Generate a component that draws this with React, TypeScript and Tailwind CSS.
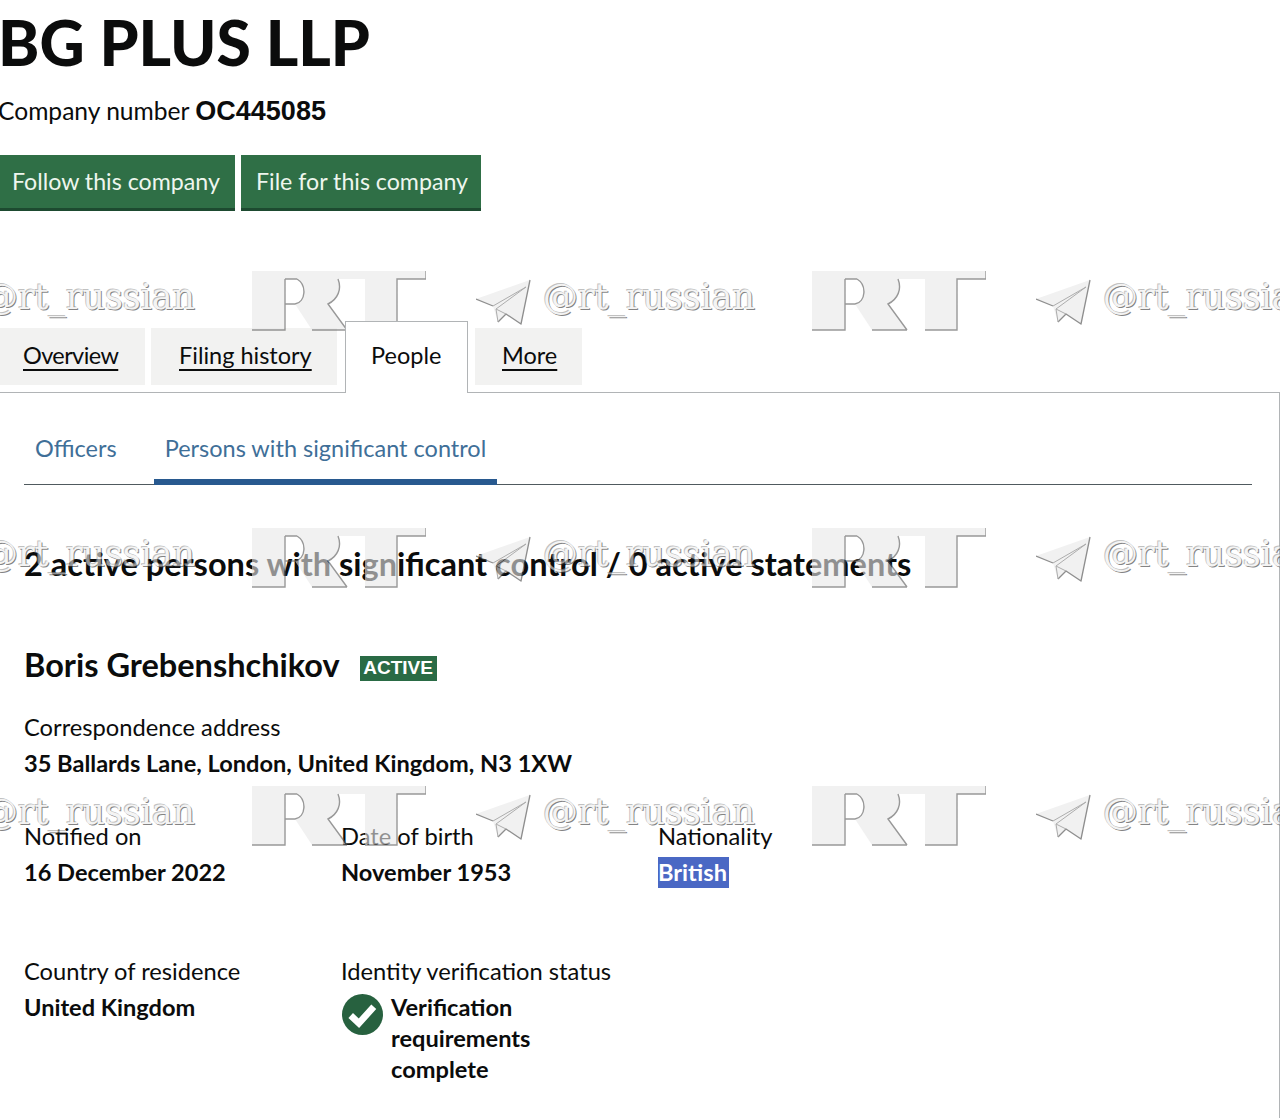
const font = "font-['Lato','Noto_Sans',sans-serif]";

const tabClass =
  "flex h-[57px] items-center bg-[#f2f2f1] pb-[2px] text-[23.5px] text-[#0b0c0c] underline underline-offset-[5px]";

function TelegramMark() {
  return (
    <svg viewBox="0 0 56 48" className="mt-[8px] h-[48px] w-[56px] shrink-0 self-start" aria-hidden="true">
      <path d="M0 20 L54 1 L45 45 L30 35 L22 43 L17 27 Z" fill="#e8e8e8" />
      <path d="M54 1 L45 45 L30 35 L22 43 M0 20 L17 27" fill="none" stroke="#444444" strokeWidth="1.3" strokeLinejoin="round" />
      <path d="M50 8 L17 27 M50 8 L20 30 L22 43 M20 30 L30 35" fill="none" stroke="#777777" strokeWidth="1" />
    </svg>
  );
}

function RtLogo() {
  return (
    <svg viewBox="0 0 174 60" className="h-[60px] w-[174px] shrink-0" aria-hidden="true">
      <path
        d="M0 0 H174 V8 H145 V59 H113 V8 H86 C90 18 86 28 76 33 L95 59 H60 L43 33 C54 31 55 14 45 8 H33 V59 H0 Z"
        fill="#e9e9e9"
      />
      <path
        d="M174 0 V8 H145 V59 H113 M95 59 H60 M33 8 V59 H0 M33 8 H45 M33 33 H43 M86 8 C90 18 86 28 76 33 L95 59 M45 8 C55 14 54 31 43 33"
        fill="none"
        stroke="#555555"
        strokeWidth="1.4"
      />
    </svg>
  );
}

function WatermarkRow({ top }: { top: string }) {
  return (
    <div className={`pointer-events-none absolute left-[-84px] flex opacity-60 ${top}`}>
      {[0, 1, 2].map((i) => (
        <div key={i} className="flex h-[60px] w-[560px] shrink-0 items-start">
          <TelegramMark />
          <span className="mt-[2px] ml-[11px] w-[269px] font-['DejaVu_Serif',serif] text-[35px] leading-[48px] tracking-[-0.1px] text-[#eeeeee] [text-shadow:1px_1px_0_#333,-1px_-1px_0_#999]">
            @rt_russian
          </span>
          <RtLogo />
        </div>
      ))}
    </div>
  );
}

function Field({ label, value, className = "" }: { label: string; value: string; className?: string }) {
  return (
    <div className={className}>
      <div className="text-[23.7px] leading-[30px] text-[#0b0c0c]">{label}</div>
      <div className="mt-[6px] text-[23.6px] font-bold leading-[30px] text-[#0b0c0c]">{value}</div>
    </div>
  );
}

export default function App() {
  return (
    <div className={`relative h-[1118px] w-[1280px] overflow-hidden bg-white text-[#0b0c0c] ${font}`}>
      <h1 className="ml-[-2px] pt-[6px] text-[62.4px] font-black leading-[72px]">BG PLUS LLP</h1>
      <p className="mt-[18px] ml-[-2px] text-[24.6px] leading-[30px]">
        Company number <strong className="font-['Liberation_Sans',sans-serif] text-[27px] font-bold">OC445085</strong>
      </p>

      <div className="mt-[29px] flex gap-[6px]">
        <button type="button" className="h-[56px] w-[235px] border-b-[3px] border-[#1d4a30] bg-[#2f6f46] pl-[12px] text-left text-[23.2px] text-[#eef6ee]">
          Follow this company
        </button>
        <button type="button" className="h-[56px] w-[240px] border-b-[3px] border-[#1d4a30] bg-[#2f6f46] pl-[15px] text-left text-[23.2px] text-[#eef6ee]">
          File for this company
        </button>
      </div>

      <div className="mt-[110px] flex h-[72px] items-start border-b border-[#b1b4b6]">
        <a className={`${tabClass} mt-[7px] w-[145px] pl-[23px] tracking-[-0.6px]`}>Overview</a>
        <a className={`${tabClass} mt-[7px] ml-[6px] w-[186px] pl-[28px]`}>Filing history</a>
        <span className="relative z-10 ml-[8px] flex h-[72px] w-[123px] items-center border-x border-t border-[#b1b4b6] bg-white pb-[4px] pl-[25px] text-[23.5px]">
          People
        </span>
        <a className={`${tabClass} mt-[7px] ml-[7px] w-[107px] pl-[27px]`}>More</a>
      </div>

      <div className="h-[725px] border-r border-[#b1b4b6] pl-[24px] pr-[27px]">
        <div className="flex h-[92px] items-end border-b border-[#505a5f] text-[23.5px] text-[#3f6f98]">
          <span className="ml-[11px] pb-[18px]">Officers</span>
          <span className="mb-[-1px] ml-[37px] border-b-[6px] border-[#28598f] px-[11px] pb-[13px]">
            Persons with significant control
          </span>
        </div>

        <h2 className="mt-[59px] text-[32.5px] font-bold leading-[40px]">
          2 active persons with significant control / 0 active statements
        </h2>

        <div className="mt-[61px] flex items-center">
          <h3 className="text-[32.5px] font-bold leading-[40px]">Boris Grebenshchikov</h3>
          <span className="ml-[20px] mt-[6px] flex h-[25px] w-[77px] items-center justify-center bg-[#2a6b45] font-['Liberation_Sans',sans-serif] text-[19px] font-bold text-white">
            ACTIVE
          </span>
        </div>

        <Field
          className="mt-[27px]"
          label="Correspondence address"
          value="35 Ballards Lane, London, United Kingdom, N3 1XW"
        />

        <div className="mt-[43px] grid grid-cols-[317px_317px_1fr]">
          <Field label="Notified on" value="16 December 2022" />
          <Field label="Date of birth" value="November 1953" />
          <div>
            <div className="text-[23.7px] leading-[30px]">Nationality</div>
            <div className="mt-[4px] text-[23.6px] font-bold">
              <span className="inline-block h-[31px] bg-[#4a68c4] pr-[2px] leading-[31px] text-white">British</span>
            </div>
          </div>
        </div>

        <div className="mt-[66px] grid grid-cols-[317px_1fr]">
          <Field label="Country of residence" value="United Kingdom" />
          <div>
            <div className="text-[23.7px] leading-[30px]">Identity verification status</div>
            <div className="mt-[6px] flex">
              <svg viewBox="0 0 40 40" className="mt-[2px] ml-[1px] h-[41px] w-[41px] shrink-0" aria-hidden="true">
                <circle cx="20" cy="20" r="20" fill="#27613f" />
                <path d="M8.5 21 L16.5 28.5 L31 12.5" fill="none" stroke="#ffffff" strokeWidth="6.5" />
              </svg>
              <div className="ml-[8px] w-[170px] text-[23.6px] font-bold leading-[31px]">
                Verification requirements complete
              </div>
            </div>
          </div>
        </div>
      </div>

      <WatermarkRow top="top-[271px]" />
      <WatermarkRow top="top-[528px]" />
      <WatermarkRow top="top-[786px]" />
    </div>
  );
}
